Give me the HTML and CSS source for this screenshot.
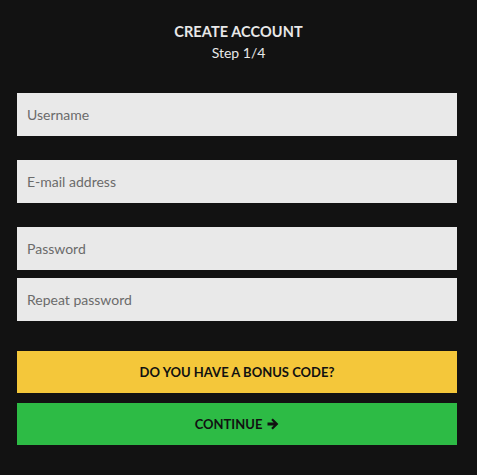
FILE: index.html
```html
<!DOCTYPE html>
<html lang="en">
<head>
    <meta charset="UTF-8">
    <meta name="viewport" content="width=device-width, initial-scale=1.0">
    <title>Create Account</title>
    <link rel="stylesheet" href="styles.css">
</head>
<body>
    <div class="register">
        <header class="register-head">
            <h1>CREATE ACCOUNT</h1>
            <p>Step 1/4</p>
        </header>

        <form class="register-form" onsubmit="return false;">
            <input class="field" type="text" placeholder="Username">
            <input class="field gap" type="email" placeholder="E-mail address">
            <div class="field-pair gap">
                <input class="field" type="password" placeholder="Password">
                <input class="field" type="password" placeholder="Repeat password">
            </div>

            <button type="button" class="btn btn-bonus">DO YOU HAVE A BONUS CODE?</button>
            <button type="submit" class="btn btn-continue">CONTINUE
                <svg class="arrow" viewBox="0 0 12 12" width="12" height="12">
                    <path d="M0.5 4.4h6.2L4.2 1.9 5.8 0.4 11.4 6 5.8 11.6 4.2 10.1 6.7 7.6H0.5z" fill="#111"/>
                </svg>
            </button>
        </form>
    </div>
</body>
</html>
```

FILE: styles.css
```css
/* Reset default margins and paddings */
* {
    margin: 0;
    padding: 0;
    box-sizing: border-box;
}

body {
    font-family: 'Lato', 'Liberation Sans', sans-serif;
    background: #121212;
    color: #e8e8e8;
}

.register {
    padding: 23px 20px 0 17px;
}

.register-head {
    text-align: center;
    margin-left: 3px;
}

.register-head h1 {
    font-size: 14.5px;
    font-weight: 700;
    letter-spacing: 0.1px;
    line-height: 18px;
}

.register-head p {
    font-size: 14px;
    line-height: 18px;
    margin-top: 3px;
}

.register-form {
    display: flex;
    flex-direction: column;
    margin-top: 31px;
}

.field {
    display: block;
    width: 440px;
    height: 43px;
    border: none;
    outline: none;
    background: #e9e9e9;
    padding: 0 10px;
    font-family: inherit;
    font-size: 14px;
    color: #333;
}

.field::placeholder {
    color: #6b6b6b;
}

.gap {
    margin-top: 24px;
}

.field-pair {
    display: flex;
    flex-direction: column;
    gap: 8px;
}

.btn {
    display: flex;
    align-items: center;
    justify-content: center;
    gap: 5px;
    width: 440px;
    height: 42px;
    border: none;
    font-family: inherit;
    font-size: 13px;
    font-weight: 700;
    color: #111;
    cursor: pointer;
}

.btn-bonus {
    background: #f4c73a;
    margin-top: 30px;
}

.btn-continue {
    background: #2dbb45;
    margin-top: 10px;
}
```
